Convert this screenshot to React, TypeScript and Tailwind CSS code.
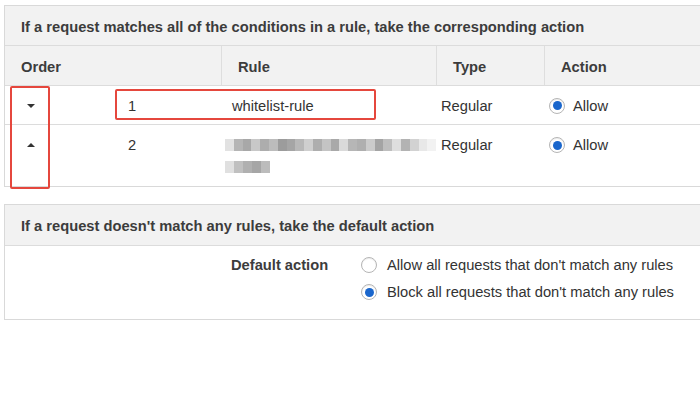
import React from 'react';

const Radio: React.FC<{ checked?: boolean }> = ({ checked }) => (
  <span className="w-[16px] h-[16px] rounded-full border border-[#b5b5b5] bg-white flex items-center justify-center shrink-0 shadow-[inset_0_1px_1px_rgba(0,0,0,0.08)]">
    {checked && <span className="w-[9px] h-[9px] rounded-full bg-[#1a66cc]" />}
  </span>
);

// pixelated stand-in for the redacted rule name
const Mosaic: React.FC<{ cells: string[] }> = ({ cells }) => (
  <div className="flex">
    {cells.map((c, i) => (
      <span key={i} className="w-[9px] h-[12px]" style={{ backgroundColor: c }} />
    ))}
  </div>
);

const line1 = ['#e2e2e2', '#b5b5b5', '#a8a8a8', '#c8c8c8', '#adadad', '#bcbcbc', '#9c9c9c', '#a5a5a5', '#b8b8b8', '#cfcfcf', '#aeaeae', '#c4c4c4', '#a9a9a9', '#dadada', '#b6b6b6', '#afafaf', '#cbcbcb', '#a4a4a4', '#bebebe', '#dedede', '#b3b3b3', '#d2d2d2', '#e8e8e8', '#f2f2f2'];
const line2 = ['#e0e0e0', '#c0c0c0', '#b0b0b0', '#a6a6a6', '#bcbcbc'];

const App: React.FC = () => {
  return (
    <div className="w-[700px] h-[394px] overflow-hidden bg-white pt-[5px] pl-[4px] font-['Liberation_Sans',Arial,sans-serif] text-[14.7px] text-[#333]">
      {/* Rules panel */}
      <div className="relative w-[720px] border border-[#d9d9d9]">
        <div className="h-[40px] bg-[#f2f2f2] border-b border-[#dcdcdc] px-[16px] pt-[3px] flex items-center font-bold text-[#3c3c3c]">
          If a request matches all of the conditions in a rule, take the corresponding action
        </div>
        <div className="grid grid-cols-[216px_215px_108px_1fr] h-[40px] bg-[#f2f2f2] border-b border-[#dcdcdc] font-bold text-[#3c3c3c]">
          <div className="px-[16px] pt-[3px] flex items-center">Order</div>
          <div className="px-[16px] pt-[3px] flex items-center border-l border-[#dedede]">Rule</div>
          <div className="px-[16px] pt-[3px] flex items-center border-l border-[#dedede]">Type</div>
          <div className="px-[16px] pt-[3px] flex items-center border-l border-[#dedede]">Action</div>
        </div>

        <div className="grid grid-cols-[216px_215px_108px_1fr] h-[39px] border-b border-[#dcdcdc] items-center pt-[2px]">
          <div className="flex items-center">
            <svg width="10" height="6" viewBox="0 0 10 6" className="ml-[21px]">
              <path d="M1 1h8L5 5z" fill="#333" />
            </svg>
            <span className="ml-[92px]">1</span>
          </div>
          <div className="pl-[11px]">whitelist-rule</div>
          <div className="pl-[5px]">Regular</div>
          <div className="pl-[5px] flex items-center gap-[8px]">
            <Radio checked />
            <span>Allow</span>
          </div>
        </div>

        <div className="grid grid-cols-[216px_215px_108px_1fr] h-[61px] items-start pt-[11px]">
          <div className="flex items-center h-[18px]">
            <svg width="10" height="6" viewBox="0 0 10 6" className="ml-[21px]">
              <path d="M1 5h8L5 1z" fill="#333" />
            </svg>
            <span className="ml-[92px]">2</span>
          </div>
          <div className="pl-[4px] pt-[3px] flex flex-col gap-[10px] blur-[0.6px]">
            <Mosaic cells={line1} />
            <Mosaic cells={line2} />
          </div>
          <div className="pl-[5px] h-[18px] flex items-center">Regular</div>
          <div className="pl-[5px] h-[18px] flex items-center gap-[8px]">
            <Radio checked />
            <span>Allow</span>
          </div>
        </div>

        {/* annotation boxes */}
        <div className="absolute left-[5px] top-[80px] w-[40px] h-[103px] border-2 border-[#e5473d] rounded-[2px]" />
        <div className="absolute left-[110px] top-[83px] w-[261px] h-[31px] border-2 border-[#e5473d] rounded-[2px]" />
      </div>

      {/* Default action panel */}
      <div className="mt-[17px] w-[720px] border border-[#d9d9d9]">
        <div className="h-[41px] bg-[#f2f2f2] border-b border-[#dcdcdc] px-[16px] pt-[2px] flex items-center font-bold text-[#3c3c3c]">
          If a request doesn't match any rules, take the default action
        </div>
        <div className="h-[73px] flex pt-[9px]">
          <div className="w-[226px] shrink-0" />
          <div className="w-[130px] shrink-0 font-bold text-[#3c3c3c] leading-[20px]">Default action</div>
          <div className="flex flex-col gap-[7px]">
            <label className="flex items-center gap-[10px] leading-[20px]">
              <Radio />
              <span>Allow all requests that don't match any rules</span>
            </label>
            <label className="flex items-center gap-[10px] leading-[20px]">
              <Radio checked />
              <span>Block all requests that don't match any rules</span>
            </label>
          </div>
        </div>
      </div>
    </div>
  );
};

export default App;
